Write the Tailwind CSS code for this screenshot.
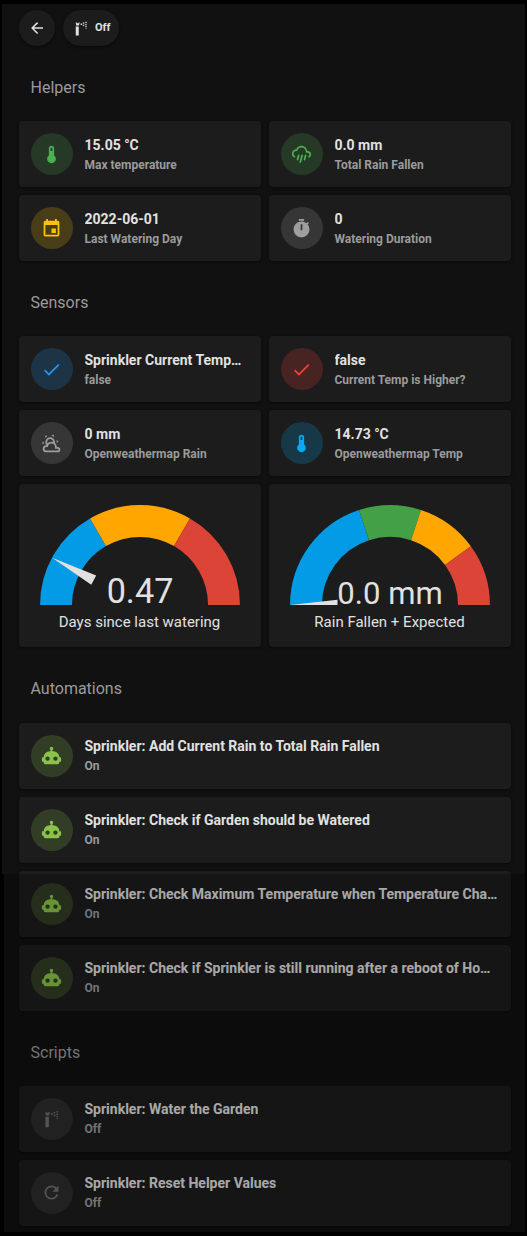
<!DOCTYPE html>
<html lang="en">
<head>
<meta charset="utf-8">
<title>Sprinkler</title>
<script src="https://cdn.jsdelivr.net/npm/@tailwindcss/browser@4"></script>
</head>
<body class="bg-black font-['Roboto',sans-serif] text-[#e1e1e1]">
<svg class="hidden">
  <symbol id="thermo" viewBox="0 0 24 24"><path d="M15 13V5A3 3 0 0 0 9 5V13A5 5 0 1 0 15 13M12 4A1 1 0 0 1 13 5V8H11V5A1 1 0 0 1 12 4Z"/></symbol>
  <symbol id="calendar" viewBox="0 0 24 24"><path d="M19,19H5V8H19M16,1V3H8V1H6V3H5C3.89,3 3,3.89 3,5V19A2,2 0 0,0 5,21H19A2,2 0 0,0 21,19V5C21,3.89 20.1,3 19,3H18V1M17,12H12V17H17V12Z"/></symbol>
  <symbol id="pouring" viewBox="0 0 24 24"><path d="M9,12C9.53,12.14 9.85,12.69 9.71,13.22L8.41,18.05C8.27,18.59 7.72,18.9 7.19,18.76C6.65,18.62 6.34,18.07 6.5,17.54L7.78,12.71C7.92,12.17 8.47,11.86 9,12M13,12C13.53,12.14 13.85,12.69 13.71,13.22L11.64,20.95C11.5,21.5 10.95,21.8 10.41,21.66C9.88,21.5 9.56,20.97 9.7,20.43L11.78,12.71C11.92,12.17 12.47,11.86 13,12M17,12C17.53,12.14 17.85,12.69 17.71,13.22L16.41,18.05C16.27,18.59 15.72,18.9 15.19,18.76C14.65,18.62 14.34,18.07 14.5,17.54L15.78,12.71C15.92,12.17 16.47,11.86 17,12M17,10V9A5,5 0 0,0 12,4C9.5,4 7.45,5.82 7.06,8.19C6.73,8.07 6.37,8 6,8A3,3 0 0,0 3,11C3,12.11 3.6,13.08 4.5,13.6V13.59C5,13.87 5.14,14.5 4.87,14.96C4.59,15.43 4,15.6 3.5,15.32V15.33C2,14.47 1,12.85 1,11A5,5 0 0,1 6,6C7,3.65 9.3,2 12,2C15.43,2 18.24,4.66 18.5,8.03L19,8A4,4 0 0,1 23,12C23,13.5 22.2,14.77 21,15.46V15.46C20.5,15.73 19.91,15.57 19.63,15.09C19.36,14.61 19.5,14 20,13.72V13.73C20.6,13.39 21,12.74 21,12A2,2 0 0,0 19,10H17Z"/></symbol>
  <symbol id="timer" viewBox="0 0 24 24"><path d="M19.03 7.39L20.45 5.97C20 5.46 19.55 5 19.04 4.56L17.62 6C16.07 4.74 14.12 4 12 4C7.03 4 3 8.03 3 13S7.03 22 12 22C17 22 21 17.97 21 13C21 10.88 20.26 8.93 19.03 7.39M13 14H11V7H13V14M15 1H9V3H15V1Z"/></symbol>
  <symbol id="check" viewBox="0 0 24 24"><path d="M21,7L9,19L3.5,13.5L4.91,12.09L9,16.17L19.59,5.59L21,7Z"/></symbol>
  <symbol id="cloudy" viewBox="0 0 24 24"><path d="M12.74,5.47C15.1,6.5 16.35,9.03 15.92,11.46C17.19,12.56 18,14.19 18,16V16.17C18.31,16.06 18.65,16 19,16A3,3 0 0,1 22,19A3,3 0 0,1 19,22H6A4,4 0 0,1 2,18A4,4 0 0,1 6,14H6.27C5,12.45 4.6,10.24 5.5,8.26C6.72,5.5 9.97,4.24 12.74,5.47M11.93,7.3C10.16,6.5 8.09,7.31 7.31,9.07C6.85,10.09 6.93,11.22 7.41,12.13C8.5,10.83 10.16,10 12,10C12.7,10 13.38,10.12 14,10.34C13.94,9.06 13.18,7.86 11.93,7.3M13.55,3.64C13,3.4 12.45,3.23 11.88,3.12L14.37,1.82L15.27,4.71C14.76,4.29 14.19,3.93 13.55,3.64M6.09,4.44C5.6,4.79 5.17,5.19 4.8,5.63L4.91,2.82L7.87,3.5C7.25,3.71 6.65,4.03 6.09,4.44M18,9.71C17.91,9.12 17.78,8.55 17.59,8L19.97,9.5L17.92,11.73C18.03,11.08 18.05,10.4 18,9.71M3.04,11.3C3.11,11.9 3.24,12.47 3.43,13L1.06,11.5L3.1,9.28C3,9.93 2.97,10.61 3.04,11.3M19,18H16V16A4,4 0 0,0 12,12A4,4 0 0,0 8,16H6A2,2 0 0,0 4,18A2,2 0 0,0 6,20H19A1,1 0 0,0 20,19A1,1 0 0,0 19,18Z"/></symbol>
  <symbol id="robot" viewBox="0 0 24 24"><path d="M12,2A2,2 0 0,1 14,4C14,4.74 13.6,5.39 13,5.73V7H14A7,7 0 0,1 21,14H22A1,1 0 0,1 23,15V18A1,1 0 0,1 22,19H21V20A2,2 0 0,1 19,22H5A2,2 0 0,1 3,20V19H2A1,1 0 0,1 1,18V15A1,1 0 0,1 2,14H3A7,7 0 0,1 10,7H11V5.73C10.4,5.39 10,4.74 10,4A2,2 0 0,1 12,2M7.5,13A2.5,2.5 0 0,0 5,15.5A2.5,2.5 0 0,0 7.5,18A2.5,2.5 0 0,0 10,15.5A2.5,2.5 0 0,0 7.5,13M16.5,13A2.5,2.5 0 0,0 14,15.5A2.5,2.5 0 0,0 16.5,18A2.5,2.5 0 0,0 19,15.5A2.5,2.5 0 0,0 16.5,13Z"/></symbol>
  <symbol id="arrow" viewBox="0 0 24 24"><path d="M20,11V13H8L13.5,18.5L12.08,19.92L4.16,12L12.08,4.08L13.5,5.5L8,11H20Z"/></symbol>
  <symbol id="refresh" viewBox="0 0 24 24"><path d="M17.65,6.35C16.2,4.9 14.21,4 12,4A8,8 0 0,0 4,12A8,8 0 0,0 12,20C15.73,20 18.84,17.45 19.73,14H17.65C16.83,16.33 14.61,18 12,18A6,6 0 0,1 6,12A6,6 0 0,1 12,6C13.66,6 15.14,6.69 16.22,7.78L13,11H20V4L17.65,6.35Z"/></symbol>
  <symbol id="sprinkler" viewBox="0 0 24 24"><path d="M5 10H9V22H5ZM5 4.500H6.500V5.500H8.500V4.500H10V6L9 8.500H5.500ZM11.500 6H13.500V8H11.500ZM14.500 4.500H16.300V6.300H14.500ZM14.500 7.500H16.300V9.300H14.500ZM17.800 3.500H19.500V5.200H17.800ZM17.800 6.200H19.500V7.900H17.800ZM17.800 8.900H19.500V10.600H17.800ZM17.800 11.600H19.500V12.800H17.800Z"/></symbol>
</svg>

<div class="relative h-[1236px] w-[527px] overflow-hidden pt-1 pl-0.5 pr-0.5">
<main class="h-[1228px] bg-[#111111] pl-[17px] pr-[14px] pt-1.5">
  <div class="flex gap-2">
    <div class="flex size-9 items-center justify-center rounded-full bg-[#1c1c1c] shadow-[0_1px_3px_rgba(0,0,0,0.5)]"><svg class="size-[18px] fill-current"><use href="#arrow"/></svg></div>
    <div class="flex h-9 w-14 items-center rounded-full bg-[#1c1c1c] pl-[9px] shadow-[0_1px_3px_rgba(0,0,0,0.5)]"><svg class="size-[18px] fill-current"><use href="#sprinkler"/></svg><span class="ml-[5px] text-[11px] font-bold">Off</span></div>
  </div>

  <h2 class="mt-[30px] pl-[11.5px] text-base leading-6 text-[#9b9b9b]">Helpers</h2>
  <div class="mt-[21px] grid grid-cols-2 gap-2">
    <div class="flex h-[66px] items-center gap-[11.5px] rounded bg-[#1c1c1c] px-3 shadow-[0_1px_3px_rgba(0,0,0,0.5)]"><div class="flex size-[42px] shrink-0 items-center justify-center rounded-full bg-[#4caf50]/20 pr-px text-[#4caf50]"><svg class="size-[21px] fill-current"><use href="#thermo"/></svg></div><div class="min-w-0 pt-0.5"><div class="truncate text-sm font-bold">15.05 °C</div><div class="text-xs font-bold leading-5 text-[#9b9b9b]">Max temperature</div></div></div>
    <div class="flex h-[66px] items-center gap-[11.5px] rounded bg-[#1c1c1c] px-3 shadow-[0_1px_3px_rgba(0,0,0,0.5)]"><div class="flex size-[42px] shrink-0 items-center justify-center rounded-full bg-[#4caf50]/20 pr-px text-[#4caf50]"><svg class="size-[21px] fill-current"><use href="#pouring"/></svg></div><div class="min-w-0 pt-0.5"><div class="truncate text-sm font-bold">0.0 mm</div><div class="text-xs font-bold leading-5 text-[#9b9b9b]">Total Rain Fallen</div></div></div>
    <div class="flex h-[66px] items-center gap-[11.5px] rounded bg-[#1c1c1c] px-3 shadow-[0_1px_3px_rgba(0,0,0,0.5)]"><div class="flex size-[42px] shrink-0 items-center justify-center rounded-full bg-[#ffc107]/20 pr-px text-[#ffc107]"><svg class="size-[21px] fill-current"><use href="#calendar"/></svg></div><div class="min-w-0 pt-0.5"><div class="truncate text-sm font-bold">2022-06-01</div><div class="text-xs font-bold leading-5 text-[#9b9b9b]">Last Watering Day</div></div></div>
    <div class="flex h-[66px] items-center gap-[11.5px] rounded bg-[#1c1c1c] px-3 shadow-[0_1px_3px_rgba(0,0,0,0.5)]"><div class="flex size-[42px] shrink-0 items-center justify-center rounded-full bg-[#9e9e9e]/20 pr-px text-[#9e9e9e]"><svg class="size-[21px] fill-current"><use href="#timer"/></svg></div><div class="min-w-0 pt-0.5"><div class="truncate text-sm font-bold">0</div><div class="text-xs font-bold leading-5 text-[#9b9b9b]">Watering Duration</div></div></div>
  </div>

  <h2 class="mt-[30px] pl-[11.5px] text-base leading-6 text-[#9b9b9b]">Sensors</h2>
  <div class="mt-[21px] grid grid-cols-2 gap-2">
    <div class="flex h-[66px] items-center gap-[11.5px] rounded bg-[#1c1c1c] px-3 shadow-[0_1px_3px_rgba(0,0,0,0.5)]"><div class="flex size-[42px] shrink-0 items-center justify-center rounded-full bg-[#2196f3]/20 pr-px text-[#2196f3]"><svg class="size-[21px] fill-current"><use href="#check"/></svg></div><div class="min-w-0 pt-0.5"><div class="truncate text-sm font-bold">Sprinkler Current Temp…</div><div class="text-xs font-bold leading-5 text-[#9b9b9b]">false</div></div></div>
    <div class="flex h-[66px] items-center gap-[11.5px] rounded bg-[#1c1c1c] px-3 shadow-[0_1px_3px_rgba(0,0,0,0.5)]"><div class="flex size-[42px] shrink-0 items-center justify-center rounded-full bg-[#f44336]/20 pr-px text-[#f44336]"><svg class="size-[21px] fill-current"><use href="#check"/></svg></div><div class="min-w-0 pt-0.5"><div class="truncate text-sm font-bold">false</div><div class="text-xs font-bold leading-5 text-[#9b9b9b]">Current Temp is Higher?</div></div></div>
    <div class="flex h-[66px] items-center gap-[11.5px] rounded bg-[#1c1c1c] px-3 shadow-[0_1px_3px_rgba(0,0,0,0.5)]"><div class="flex size-[42px] shrink-0 items-center justify-center rounded-full bg-[#9e9e9e]/20 pr-px text-[#9e9e9e]"><svg class="size-[21px] fill-current"><use href="#cloudy"/></svg></div><div class="min-w-0 pt-0.5"><div class="truncate text-sm font-bold">0 mm</div><div class="text-xs font-bold leading-5 text-[#9b9b9b]">Openweathermap Rain</div></div></div>
    <div class="flex h-[66px] items-center gap-[11.5px] rounded bg-[#1c1c1c] px-3 shadow-[0_1px_3px_rgba(0,0,0,0.5)]"><div class="flex size-[42px] shrink-0 items-center justify-center rounded-full bg-[#03a9f4]/20 pr-px text-[#03a9f4]"><svg class="size-[21px] fill-current"><use href="#thermo"/></svg></div><div class="min-w-0 pt-0.5"><div class="truncate text-sm font-bold">14.73 °C</div><div class="text-xs font-bold leading-5 text-[#9b9b9b]">Openweathermap Temp</div></div></div>

    <div class="flex h-[163px] flex-col items-center rounded bg-[#1c1c1c] pt-4 shadow-[0_1px_3px_rgba(0,0,0,0.5)]">
      <svg class="h-[105px] w-[210px] overflow-visible" viewBox="-50 -50 100 50">
        <g fill="none" stroke-width="15.200">
          <path stroke="#039be5" d="M-40 0A40 40 0 0 1 -20 -34.641"/>
          <path stroke="#ffa600" d="M-20 -34.641A40 40 0 0 1 20 -34.641"/>
          <path stroke="#db4437" d="M20 -34.641A40 40 0 0 1 40 0"/>
        </g>
        <path fill="#e1e1e1" transform="rotate(28.200)" d="M-25 -2.500L-47.500 0L-25 2.500Z"/>
        <text x="0" y="-0.900" text-anchor="middle" fill="#e1e1e1" font-size="16.300">0.47</text>
      </svg>
      <div class="mt-1.5 pr-px text-[15px] leading-[22px]">Days since last watering</div>
    </div>
    <div class="flex h-[163px] flex-col items-center rounded bg-[#1c1c1c] pt-4 shadow-[0_1px_3px_rgba(0,0,0,0.5)]">
      <svg class="h-[105px] w-[210px] overflow-visible" viewBox="-50 -50 100 50">
        <g fill="none" stroke-width="15.200">
          <path stroke="#039be5" d="M-40 0A40 40 0 0 1 -12.361 -38.042"/>
          <path stroke="#43a047" d="M-12.361 -38.042A40 40 0 0 1 12.361 -38.042"/>
          <path stroke="#ffa600" d="M12.361 -38.042A40 40 0 0 1 32.361 -23.511"/>
          <path stroke="#db4437" d="M32.361 -23.511A40 40 0 0 1 40 0"/>
        </g>
        <path fill="#e1e1e1" d="M-25 -2.500L-47.500 0H-25Z"/>
        <text x="0" y="-0.400" text-anchor="middle" fill="#e1e1e1" font-size="14.800">0.0 mm</text>
      </svg>
      <div class="mt-1.5 pr-px text-[15px] leading-[22px]">Rain Fallen + Expected</div>
    </div>
  </div>

  <h2 class="mt-[30px] pl-[11.5px] text-base leading-6 text-[#9b9b9b]">Automations</h2>
  <div class="mt-[22px] grid grid-cols-1 gap-2">
    <div class="flex h-[66px] items-center gap-[11.5px] rounded bg-[#1c1c1c] px-3 shadow-[0_1px_3px_rgba(0,0,0,0.5)]"><div class="flex size-[42px] shrink-0 items-center justify-center rounded-full bg-[#8bc34a]/20 pr-px pb-px text-[#8bc34a]"><svg class="size-[21px] fill-current"><use href="#robot"/></svg></div><div class="min-w-0"><div class="truncate text-sm font-bold">Sprinkler: Add Current Rain to Total Rain Fallen</div><div class="text-xs font-bold leading-5 text-[#9b9b9b]">On</div></div></div>
    <div class="flex h-[66px] items-center gap-[11.5px] rounded bg-[#1c1c1c] px-3 shadow-[0_1px_3px_rgba(0,0,0,0.5)]"><div class="flex size-[42px] shrink-0 items-center justify-center rounded-full bg-[#8bc34a]/20 pr-px pb-px text-[#8bc34a]"><svg class="size-[21px] fill-current"><use href="#robot"/></svg></div><div class="min-w-0"><div class="truncate text-sm font-bold">Sprinkler: Check if Garden should be Watered</div><div class="text-xs font-bold leading-5 text-[#9b9b9b]">On</div></div></div>
    <div class="flex h-[66px] items-center gap-[11.5px] rounded bg-[#1c1c1c] px-3 shadow-[0_1px_3px_rgba(0,0,0,0.5)]"><div class="flex size-[42px] shrink-0 items-center justify-center rounded-full bg-[#8bc34a]/20 pr-px pb-px text-[#8bc34a]"><svg class="size-[21px] fill-current"><use href="#robot"/></svg></div><div class="min-w-0"><div class="truncate text-sm font-bold">Sprinkler: Check Maximum Temperature when Temperature Cha…</div><div class="text-xs font-bold leading-5 text-[#9b9b9b]">On</div></div></div>
    <div class="flex h-[66px] items-center gap-[11.5px] rounded bg-[#1c1c1c] px-3 shadow-[0_1px_3px_rgba(0,0,0,0.5)]"><div class="flex size-[42px] shrink-0 items-center justify-center rounded-full bg-[#8bc34a]/20 pr-px pb-px text-[#8bc34a]"><svg class="size-[21px] fill-current"><use href="#robot"/></svg></div><div class="min-w-0"><div class="truncate text-sm font-bold">Sprinkler: Check if Sprinkler is still running after a reboot of Ho…</div><div class="text-xs font-bold leading-5 text-[#9b9b9b]">On</div></div></div>
  </div>

  <h2 class="mt-[30px] pl-[11.5px] text-base leading-6 text-[#9b9b9b]">Scripts</h2>
  <div class="mt-[21px] grid grid-cols-1 gap-2">
    <div class="flex h-[66px] items-center gap-[11.5px] rounded bg-[#1c1c1c] px-3 shadow-[0_1px_3px_rgba(0,0,0,0.5)]"><div class="flex size-[42px] shrink-0 items-center justify-center rounded-full bg-[#6f6f6f]/20 pr-px pb-px text-[#6f6f6f]"><svg class="size-[21px] fill-current"><use href="#sprinkler"/></svg></div><div class="min-w-0"><div class="truncate text-sm font-bold">Sprinkler: Water the Garden</div><div class="text-xs font-bold leading-5 text-[#9b9b9b]">Off</div></div></div>
    <div class="flex h-[66px] items-center gap-[11.5px] rounded bg-[#1c1c1c] px-3 shadow-[0_1px_3px_rgba(0,0,0,0.5)]"><div class="flex size-[42px] shrink-0 items-center justify-center rounded-full bg-[#6f6f6f]/20 pr-px pb-px text-[#6f6f6f]"><svg class="size-[21px] fill-current"><use href="#refresh"/></svg></div><div class="min-w-0"><div class="truncate text-sm font-bold">Sprinkler: Reset Helper Values</div><div class="text-xs font-bold leading-5 text-[#9b9b9b]">Off</div></div></div>
  </div>
</main>
<!-- Dimming scrim over the lower part of the dashboard -->
<div class="absolute inset-x-0 top-[874px] bottom-0 border-l-4 border-black bg-black/25"></div>
</div>
</body>
</html>
